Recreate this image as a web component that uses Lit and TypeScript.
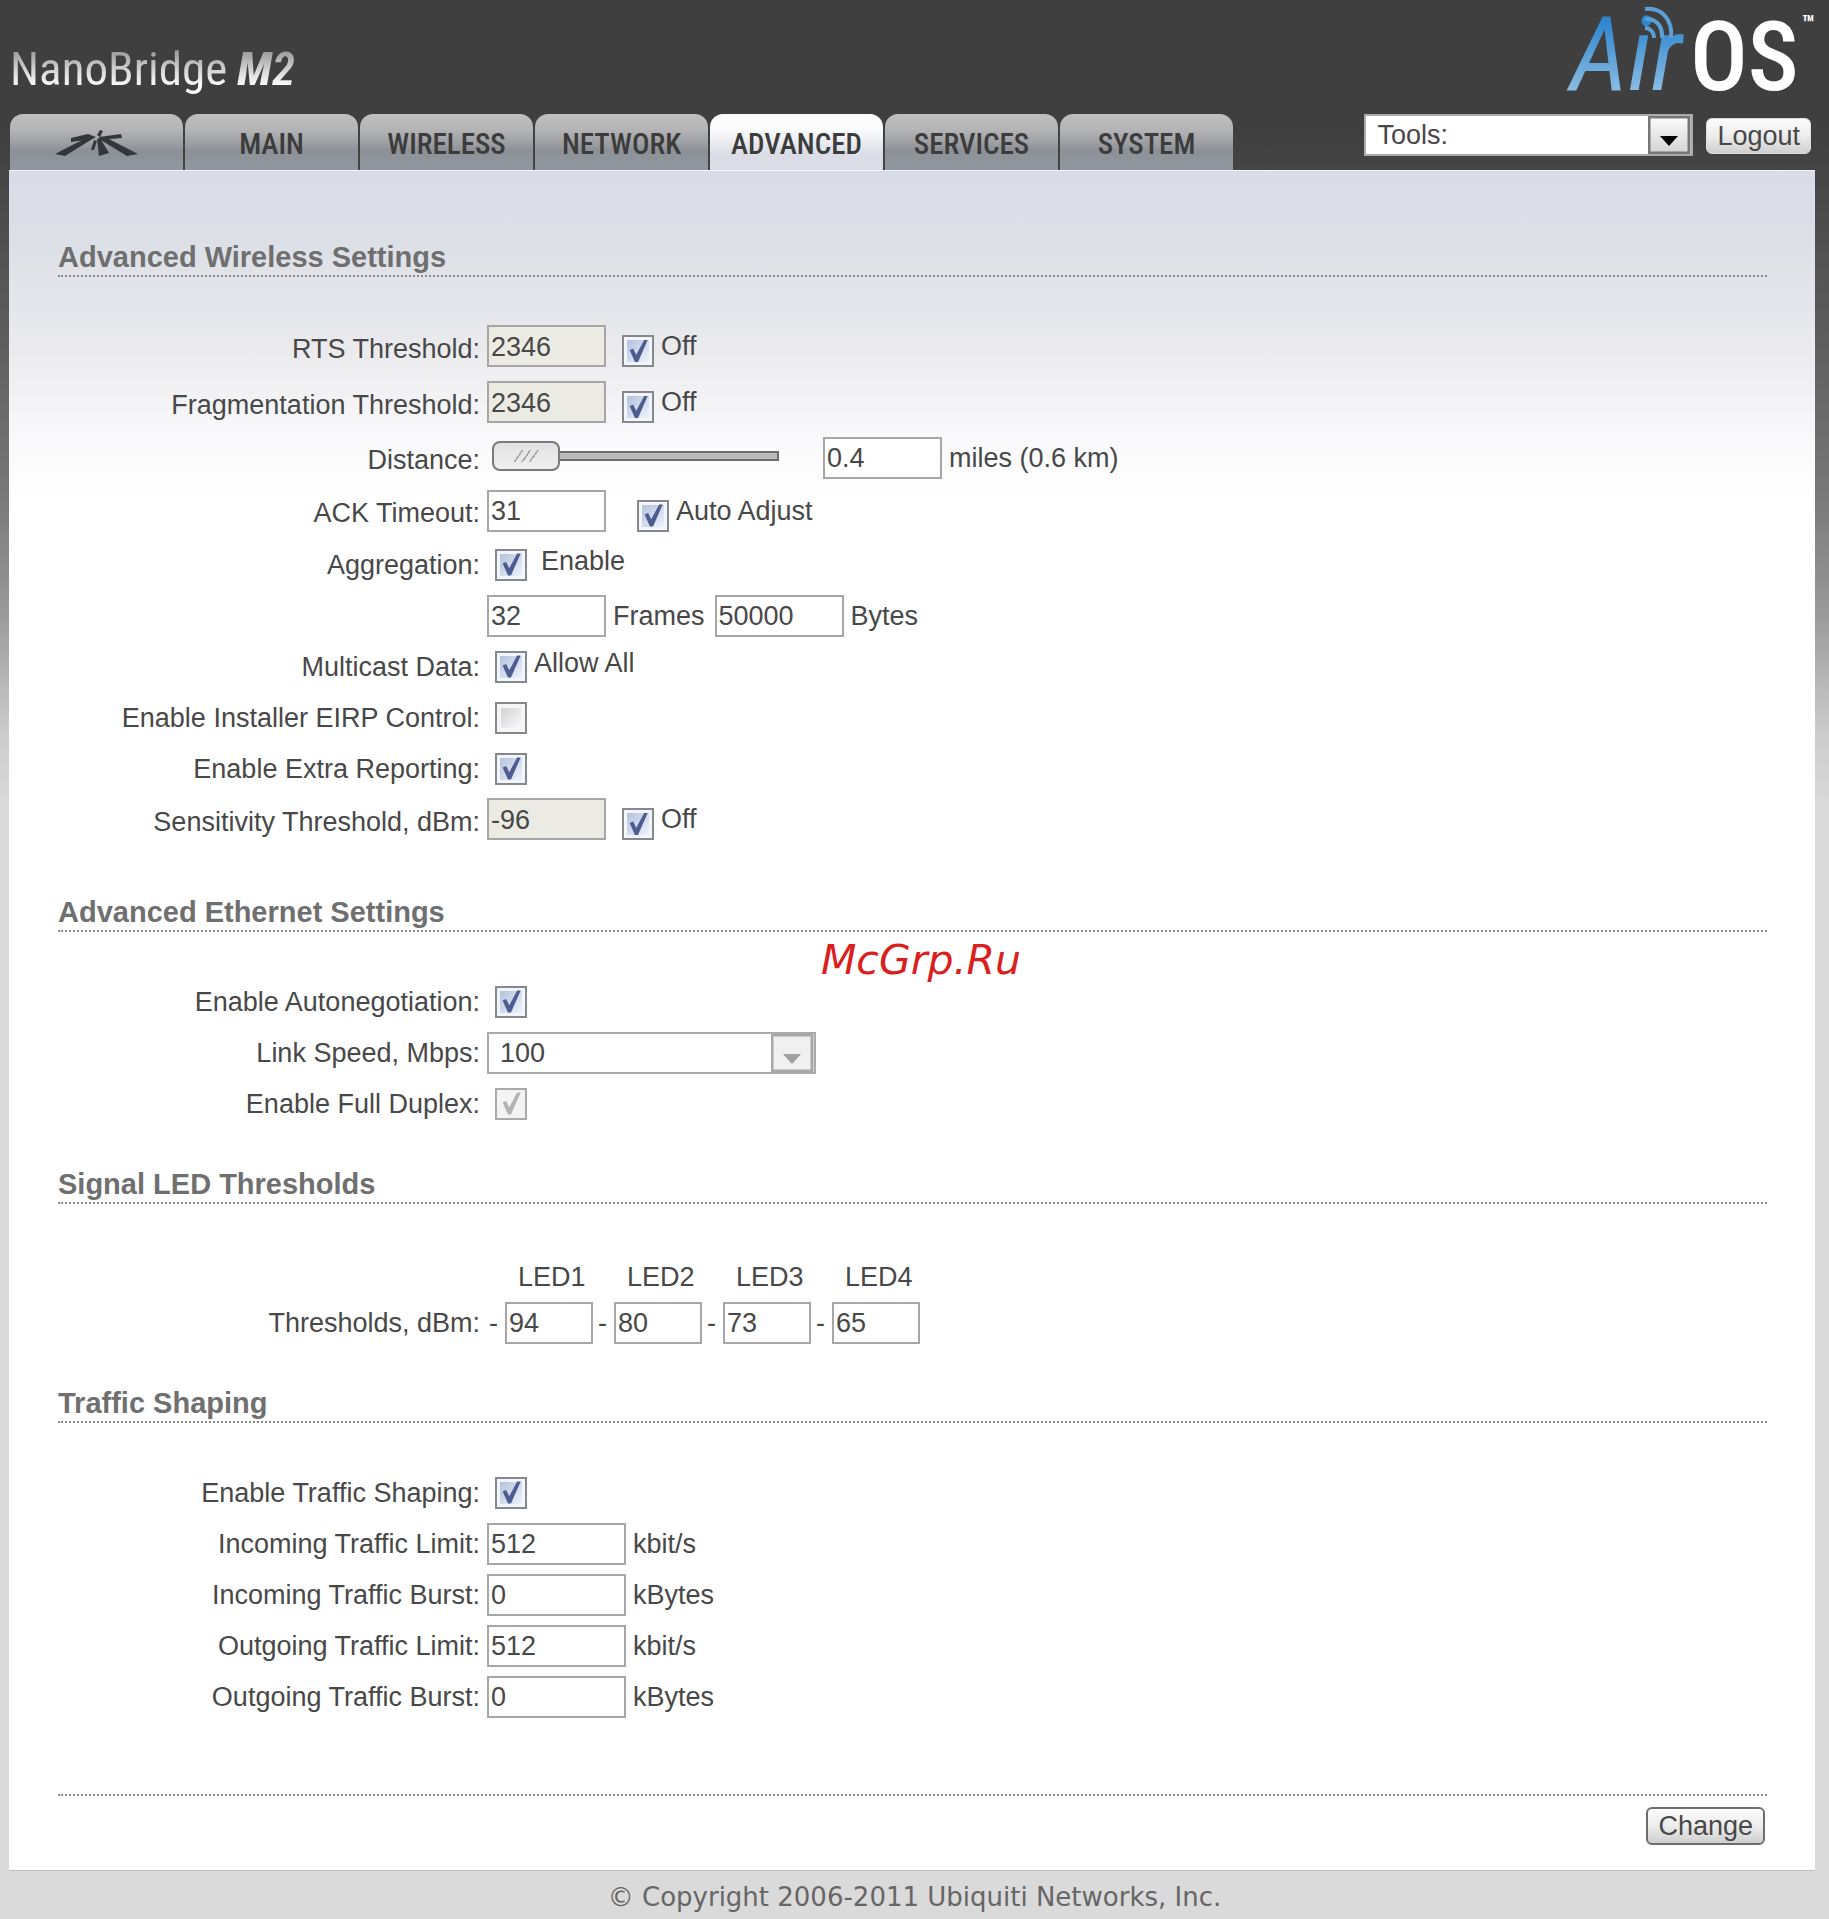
import { LitElement, html, css, nothing } from "lit";

interface Traffic { id: string; label: string; value: string; unit: string; }

const TABS = ["MAIN", "WIRELESS", "NETWORK", "ADVANCED", "SERVICES", "SYSTEM"];
const LEDS = [
  { name: "LED1", value: "94" },
  { name: "LED2", value: "80" },
  { name: "LED3", value: "73" },
  { name: "LED4", value: "65" },
];
const TRAFFIC: Traffic[] = [
  { id: "in-limit", label: "Incoming Traffic Limit:", value: "512", unit: "kbit/s" },
  { id: "in-burst", label: "Incoming Traffic Burst:", value: "0", unit: "kBytes" },
  { id: "out-limit", label: "Outgoing Traffic Limit:", value: "512", unit: "kbit/s" },
  { id: "out-burst", label: "Outgoing Traffic Burst:", value: "0", unit: "kBytes" },
];

class AppRoot extends LitElement {
  static styles = css`
    :host {
      display: block;
      min-height: 100vh;
      font-family: "Liberation Sans", Arial, sans-serif;
      font-size: 27px;
      line-height: 32px;
      color: #484848;
      background: linear-gradient(#3f3f3f 0, #3f3f3f 130px, #5e5e5e 340px, #777 490px, #999 612px, #cbcbcb 730px, #dadada 810px);
    }
    * { box-sizing: border-box; }
    button, input, select { font: inherit; color: inherit; margin: 0; }

    .brand-row {
      display: flex;
      justify-content: space-between;
      align-items: flex-end;
      height: 114px;
      padding: 0 14px 0 10px;
      font-family: "Roboto Condensed", "Liberation Sans", sans-serif;
    }
    .device {
      margin: 0;
      padding-bottom: 17px;
      font-size: 47px;
      line-height: 56px;
      font-weight: 400;
      display: flex;
      gap: 10px;
    }
    .metal {
      color: transparent;
      background: linear-gradient(#999 10px, #ddd 32px, #fff 46px);
      background-clip: text;
      -webkit-background-clip: text;
    }
    .model { font-style: italic; font-weight: 800; padding-right: 4px; }
    .model-number { font-weight: 600; }
    .os {
      position: relative;
      display: flex;
      align-items: baseline;
      padding-bottom: 4px;
      line-height: 106px;
    }
    .air {
      font-size: 104px;
      font-style: italic;
      color: transparent;
      background: linear-gradient(#2f86cf 20px, #8fbfe2 92px);
      background-clip: text;
      -webkit-background-clip: text;
      padding: 0 8px;
    }
    .os-name { font-size: 96px; font-weight: 500; color: #fff; }
    .tm { align-self: flex-start; font-size: 24px; font-weight: 700; line-height: 28px; color: #fff; padding: 8px 0 0 3px; }
    .waves { position: absolute; left: 80px; top: 2px; }

    .nav-row { display: flex; justify-content: space-between; padding: 0 14px 0 10px; height: 56px; }
    .tabs { display: flex; gap: 2px; }
    .tab {
      width: 173px;
      height: 56px;
      display: flex;
      align-items: center;
      justify-content: center;
      padding-top: 4px;
      border-radius: 13px 13px 0 0;
      background: linear-gradient(#bfbfbf 0, #b4b4b6 16px, #9b9da1 30px, #8d9197 36px, #8f949b 46px, #9298a0 56px);
      font-family: "Roboto Condensed", "Liberation Sans", sans-serif;
      font-size: 29px;
      font-weight: 500;
      color: #3c3c3c;
      text-decoration: none;
    }
    .tab.current { background: linear-gradient(#fff 0, #fafbfc 16px, #dadde6 40px); }
    .tools { display: flex; align-items: flex-start; gap: 13px; padding-right: 4px; }
    .logout { margin-top: 4px; }

    .btn {
      border: 2px solid #6e6e6e;
      border-radius: 6px;
      background: linear-gradient(#fcfcfc, #ececec 50%, #cfcfcf);
      padding: 0 10px;
      height: 38px;
      line-height: 32px;
    }
    .btn.logout { height: 36px; border: 1px solid #ddd; }

    .picker { position: relative; width: 329px; height: 42px; }
    .picker select {
      appearance: none;
      width: 100%;
      height: 100%;
      border: 2px solid #aaa;
      border-radius: 0;
      background: #fff;
      padding: 0 48px 0 11px;
      line-height: 32px;
      opacity: 1;
    }
    .picker svg { position: absolute; right: 2px; top: 2px; pointer-events: none; }

    .panel {
      margin: 0 14px 0 9px;
      padding: 68px 48px 25px 49px;
      background: linear-gradient(#d9dce6 0, #dcdfe6 70px, #ebebee 180px, #f8f8fa 260px, #fff 330px);
      border-top: 1px solid #f4f5f8;
      border-bottom: 1px solid #bdbdbd;
    }
    section { padding-bottom: 37px; }
    section.wireless { padding-bottom: 44px; }
    h2 {
      margin: 0 0 44px;
      font-size: 29px;
      line-height: 36px;
      font-weight: 700;
      color: #6f6f6f;
      border-bottom: 2px dotted #8a8a8a;
    }

    .row {
      display: grid;
      grid-template-columns: 422px 1fr;
      column-gap: 7px;
      align-items: center;
      height: 51px;
    }
    .row.roomy { height: 56px; }
    .row.mid { height: 53px; }
    .row .name { text-align: right; white-space: nowrap; }
    .field { display: flex; align-items: center; }
    .roomy .field { padding-bottom: 6px; }
    .mid .field { padding-bottom: 4px; }
    .box {
      width: 119px;
      height: 42px;
      border: 2px solid #a6a6a6;
      border-radius: 0;
      background: #fff;
      padding: 2px 2px 0;
    }
    .box:disabled { background: #ebebe4; }
    .box.wide { width: 139px; }
    .box.bytes { width: 129px; }
    .box.small { width: 88px; }
    .note { padding-left: 7px; white-space: nowrap; }
    .note.spaced { padding-right: 10px; }
    .note.raised, .note.far { padding-bottom: 8px; }
    .note.far { padding-left: 14px; }

    .check {
      appearance: none;
      flex: none;
      width: 32px;
      height: 32px;
      border: 2px solid #85888c;
      background: linear-gradient(135deg, #d3d3d3, #fafafa) center / 20px 20px no-repeat #f6f6f6;
      display: grid;
      place-items: center;
    }
    .check:checked { background: linear-gradient(135deg, #b4c2dc, #eef3fc) center / 22px 22px no-repeat #f2f5fa; }
    .check:checked::before {
      content: "";
      width: 22px;
      height: 24px;
      background: #4e5c91;
      clip-path: polygon(12% 46%, 28% 40%, 42% 66%, 78% 4%, 94% 4%, 50% 96%, 36% 96%);
    }
    .check:disabled { border-color: #aaa; background: #f3f3f3; }
    .check:disabled::before { background: #b4b4b4; }
    .check.alone { margin-left: 8px; }
    .check.side { margin-left: 16px; align-self: flex-end; }
    .check.apart { margin-left: 31px; align-self: flex-end; }

    .range {
      appearance: none;
      width: 287px;
      height: 30px;
      margin: 0 44px 4px 5px;
      background: linear-gradient(#6e6e6e 2px, #b9bab9 2px, #b9bab9 8px, #6e6e6e 8px) center / 100% 10px no-repeat;
      border-right: 2px solid #6e6e6e;
      border-image: linear-gradient(transparent 10px, #6e6e6e 10px, #6e6e6e 20px, transparent 20px) 1;
    }
    .range::-webkit-slider-thumb {
      appearance: none;
      width: 68px;
      height: 30px;
      border: 2px solid #7a7a7a;
      border-radius: 8px;
      background:
        linear-gradient(125deg, transparent 30%, #aaa 30%, #aaa 35%, transparent 35%, transparent 48%, #aaa 48%, #aaa 53%, transparent 53%, transparent 66%, #aaa 66%, #aaa 71%, transparent 71%) center / 34px 12px no-repeat,
        linear-gradient(#e2e2e2, #f0f0f0);
    }

    .leds { display: grid; grid-template-columns: repeat(4, 109px); }
    .leds label { padding-left: 31px; }
    .led-head { align-items: end; height: 49px; padding-bottom: 4px; }
    .led { display: grid; grid-template-columns: 18px 88px; }
    .dash { line-height: 42px; padding-left: 2px; }

    .actions { margin-top: 35px; border-top: 2px dotted #8a8a8a; padding: 11px 2px 0 0; display: flex; justify-content: flex-end; }
    footer {
      padding: 10px 0 6px;
      text-align: center;
      font-family: "DejaVu Sans", Verdana, sans-serif;
      font-size: 26px;
      color: #666;
    }
    .watermark {
      position: absolute;
      left: 821px;
      top: 936px;
      font-family: "DejaVu Sans", Verdana, sans-serif;
      font-size: 41px;
      line-height: 48px;
      font-style: italic;
      color: #da1f1f;
      pointer-events: none;
    }
  `;

  private arrow(muted: boolean) {
    const line = muted ? "#a8a8a8" : "#777";
    return html`<svg width="43" height="38" viewBox="0 0 43 38" aria-hidden="true">
      <defs><linearGradient id="face" x2="0" y2="1"><stop stop-color="#fbfbfb"/><stop offset="1" stop-color="#d4d4d4"/></linearGradient></defs>
      <rect x="1" y="1" width="40" height="36" fill=${muted ? "#f0f0f0" : "url(#face)"} stroke=${line} stroke-width="3"/>
      <path d="M12 20h18l-9 10z" fill=${muted ? "#a0a0a0" : "#000"}/>
    </svg>`;
  }

  private check(id: string, cls: string, checked = true, disabled = false) {
    return html`<input type="checkbox" class="check ${cls}" id=${id} ?checked=${checked} ?disabled=${disabled}>`;
  }

  private threshold(id: string, label: string, value: string) {
    return html`<div class="row roomy">
      <label class="name" for=${id}>${label}</label>
      <div class="field">
        <input class="box" id=${id} .value=${value} disabled>
        ${this.check(`${id}-off`, "side")}<label class="note" for="${id}-off">Off</label>
      </div>
    </div>`;
  }

  private toggle(id: string, label: string, checked = true, disabled = false, note = "", noteCls = "raised") {
    return html`<div class="row">
      <label class="name" for=${id}>${label}</label>
      <div class="field">${this.check(id, "alone", checked, disabled)}
        ${note ? html`<label class="note ${noteCls}" for=${id}>${note}</label>` : nothing}
      </div>
    </div>`;
  }

  render() {
    return html`
      <header>
        <div class="brand-row">
          <h1 class="device"><span class="metal">NanoBridge</span><span class="metal model">M<span class="model-number">2</span></span></h1>
          <div class="os">
            <span class="air">Air</span><span class="os-name">OS</span><span class="tm">™</span>
            <svg class="waves" width="36" height="38" viewBox="0 0 36 38" fill="none" stroke="#5aa0d6" stroke-width="4" aria-hidden="true">
              <path d="M3 5C19 3 31 15 29 34"/><path d="M3 15C13 14 21 21 20 34"/><path d="M3 24C8 24 12 28 12 34"/>
            </svg>
          </div>
        </div>
        <div class="nav-row">
          <nav class="tabs">
            <a class="tab" href="#" aria-label="Ubiquiti">
              <svg width="92" height="30" viewBox="0 0 92 30" fill="#33373b" aria-hidden="true">
                <path d="M4 25L37 8l6 1L14 27z"/><path d="M87 25L54 8l-6 2L76 27z"/>
                <path d="M20 9l17-4 8 3-4 2-21 3z"/><path d="M48 8l22-3 1 4-22 2z"/>
                <path d="M46 6l3-5 3 1-3 6z"/><path d="M46 10l3-1 9 15-10 3z"/><path d="M43 11l3 1-3 9-3 0z"/>
              </svg>
            </a>
            ${TABS.map((t) => html`<a class="tab ${t === "ADVANCED" ? "current" : ""}" href="#">${t}</a>`)}
          </nav>
          <div class="tools">
            <div class="picker">
              <select aria-label="Tools"><option>Tools:</option></select>${this.arrow(false)}
            </div>
            <button class="btn logout" type="button">Logout</button>
          </div>
        </div>
      </header>

      <main class="panel">
        <section class="wireless">
          <h2>Advanced Wireless Settings</h2>
          ${this.threshold("rts", "RTS Threshold:", "2346")}
          ${this.threshold("frag", "Fragmentation Threshold:", "2346")}
          <div class="row mid">
            <label class="name" for="range">Distance:</label>
            <div class="field">
              <input type="range" class="range" id="range" min="0" max="100" value="0">
              <input class="box" id="miles" aria-label="Distance in miles" .value=${"0.4"}>
              <label class="note" for="miles">miles (0.6 km)</label>
            </div>
          </div>
          <div class="row mid">
            <label class="name" for="ack">ACK Timeout:</label>
            <div class="field">
              <input class="box" id="ack" .value=${"31"}>
              ${this.check("auto", "apart")}<label class="note" for="auto">Auto Adjust</label>
            </div>
          </div>
          ${this.toggle("aggr", "Aggregation:", true, false, "Enable", "far")}
          <div class="row">
            <span></span>
            <div class="field">
              <input class="box" id="frames" .value=${"32"}><label class="note spaced" for="frames">Frames</label>
              <input class="box bytes" id="bytes" .value=${"50000"}><label class="note" for="bytes">Bytes</label>
            </div>
          </div>
          ${this.toggle("mcast", "Multicast Data:", true, false, "Allow All")}
          ${this.toggle("eirp", "Enable Installer EIRP Control:", false)}
          ${this.toggle("extra", "Enable Extra Reporting:")}
          ${this.threshold("sens", "Sensitivity Threshold, dBm:", "-96")}
        </section>

        <section>
          <h2>Advanced Ethernet Settings</h2>
          ${this.toggle("auton", "Enable Autonegotiation:")}
          <div class="row">
            <label class="name" for="speed">Link Speed, Mbps:</label>
            <div class="field"><div class="picker">
              <select id="speed" disabled><option>100</option></select>${this.arrow(true)}
            </div></div>
          </div>
          ${this.toggle("duplex", "Enable Full Duplex:", true, true)}
        </section>

        <section>
          <h2>Signal LED Thresholds</h2>
          <div class="row led-head">
            <span></span>
            <div class="leds">${LEDS.map((l) => html`<label for=${l.name}>${l.name}</label>`)}</div>
          </div>
          <div class="row">
            <span class="name">Thresholds, dBm:</span>
            <div class="leds">
              ${LEDS.map((l) => html`<div class="led"><span class="dash">-</span><input class="box small" id=${l.name} .value=${l.value}></div>`)}
            </div>
          </div>
        </section>

        <section>
          <h2>Traffic Shaping</h2>
          ${this.toggle("shape", "Enable Traffic Shaping:")}
          ${TRAFFIC.map((t) => html`<div class="row">
            <label class="name" for=${t.id}>${t.label}</label>
            <div class="field"><input class="box wide" id=${t.id} .value=${t.value}><span class="note">${t.unit}</span></div>
          </div>`)}
        </section>

        <div class="actions"><button class="btn" type="button">Change</button></div>
      </main>
      <footer>© Copyright 2006-2011 Ubiquiti Networks, Inc.</footer>
      <div class="watermark">McGrp.Ru</div>
    `;
  }
}
customElements.define("app-root", AppRoot);
